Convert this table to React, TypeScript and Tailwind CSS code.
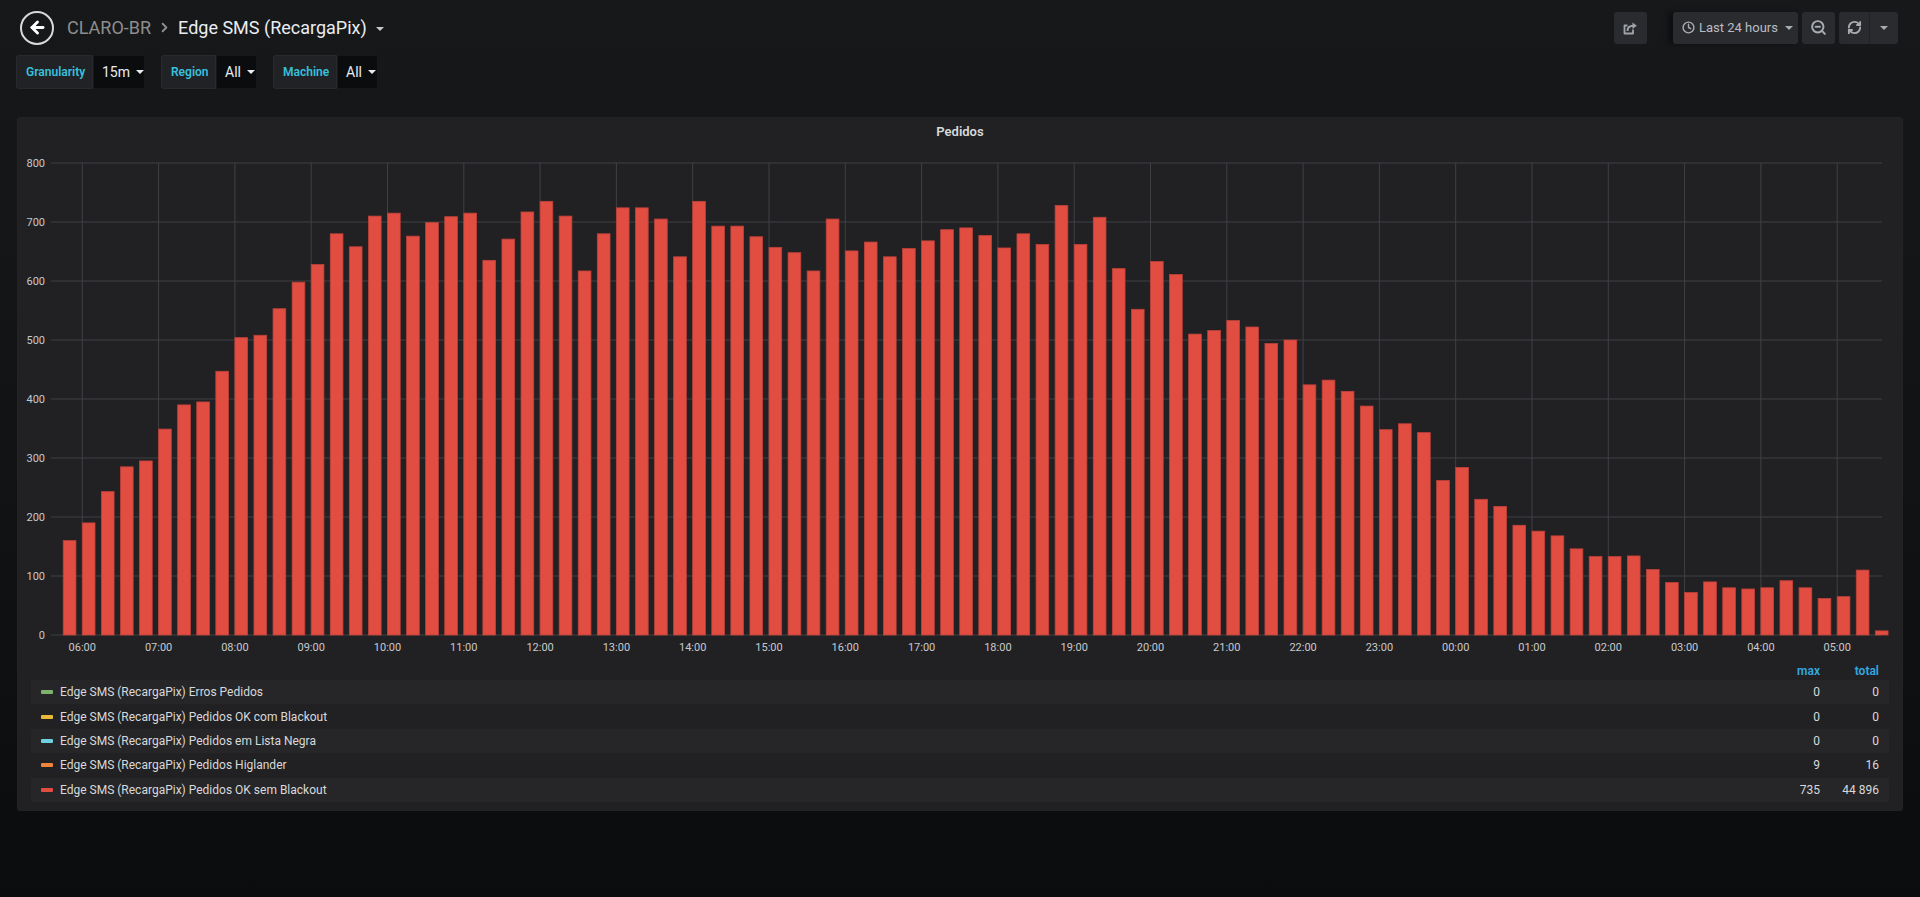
import React from "react";
import { ArrowLeft, ChevronRight, Clock, ZoomOut, RefreshCw } from "lucide-react";

const vals = [
  160, 190, 243, 285, 295, 349, 390, 395, 447, 504, 508, 553, 598, 628, 680, 658,
  710, 715, 676, 699, 709, 715, 635, 671, 717, 735, 710, 617, 680, 724, 724, 705,
  641, 735, 693, 693, 675, 657, 648, 617, 705, 651, 666, 641, 655, 668, 687, 690,
  677, 656, 680, 662, 728, 662, 708, 621, 552, 633, 611, 510, 516, 533, 522, 494,
  500, 424, 432, 413, 388, 348, 358, 343, 262, 284, 230, 218, 186, 176, 168, 146,
  133, 133, 134, 111, 89, 72, 90, 80, 78, 80, 92, 80, 62, 65, 110, 7,
];

const hours = [
  "06:00", "07:00", "08:00", "09:00", "10:00", "11:00", "12:00", "13:00", "14:00",
  "15:00", "16:00", "17:00", "18:00", "19:00", "20:00", "21:00", "22:00", "23:00",
  "00:00", "01:00", "02:00", "03:00", "04:00", "05:00",
];

const legend = [
  { color: "#7eb26d", name: "Edge SMS (RecargaPix) Erros Pedidos", max: "0", total: "0" },
  { color: "#eab839", name: "Edge SMS (RecargaPix) Pedidos OK com Blackout", max: "0", total: "0" },
  { color: "#6ed0e0", name: "Edge SMS (RecargaPix) Pedidos em Lista Negra", max: "0", total: "0" },
  { color: "#ef843c", name: "Edge SMS (RecargaPix) Pedidos Higlander", max: "9", total: "16" },
  { color: "#e24d42", name: "Edge SMS (RecargaPix) Pedidos OK sem Blackout", max: "735", total: "44 896" },
];

const X0 = 33;
const X1 = 1864;
const Y0 = 489;
const SCALE = 472 / 800;
const HOUR = 76.3;
const FIRST_HOUR_X = 64.3;
const SLOT = HOUR / 4;
const BAR_W = 12.7;

function Caret({ color = "#d8d9da" }: { color?: string }) {
  return (
    <span
      className="inline-block w-0 h-0 border-x-[4px] border-x-transparent border-t-[4px]"
      style={{ borderTopColor: color }}
    />
  );
}

function ShareIcon() {
  return (
    <svg width="17" height="16" viewBox="0 0 17 16" fill="none">
      <path d="M11 9.5V13.5H2.5V5.5H5.5" stroke="#9fa4aa" strokeWidth="1.8" strokeLinejoin="round" />
      <path d="M5.5 11C5.5 7.5 8 5.8 11.5 5.8" stroke="#9fa4aa" strokeWidth="2" fill="none" />
      <path d="M10.5 2.5L14.8 5.8L10.5 9.1Z" fill="#9fa4aa" />
    </svg>
  );
}

function VarSelect({ label, value, lw, vw }: { label: string; value: string; lw: string; vw: string }) {
  return (
    <div className="flex h-[34px]">
      <div
        className={`flex items-center pl-[9px] bg-[#202226] border border-[#292a2e] rounded-l-[3px] text-[#38c0dc] text-[12px] font-semibold ${lw}`}
      >
        {label}
      </div>
      <div
        className={`flex items-center gap-[6px] pl-[8px] bg-[#0b0c0e] border border-[#17181a] rounded-r-[3px] text-[14px] text-[#e9edf2] ${vw}`}
      >
        <span>{value}</span>
        <Caret color="#e9edf2" />
      </div>
    </div>
  );
}

function Chart() {
  const gridColor = "#3f4043";
  const yTicks = [0, 100, 200, 300, 400, 500, 600, 700, 800];
  return (
    <svg width="1886" height="515" className="block">
      {yTicks.map((v) => {
        const y = Y0 - v * SCALE;
        return (
          <g key={v}>
            <line x1={X0} x2={X1} y1={y} y2={y} stroke={gridColor} strokeWidth="1" />
            <text x={27} y={y + 4} textAnchor="end" fontSize="11" fill="#c8c9cb" fontFamily="Roboto, sans-serif">
              {v}
            </text>
          </g>
        );
      })}
      {hours.map((h, i) => {
        const x = FIRST_HOUR_X + i * HOUR;
        return (
          <g key={h}>
            <line x1={x} x2={x} y1={Y0 - 800 * SCALE} y2={Y0} stroke={gridColor} strokeWidth="1" />
            <text x={x} y={505} textAnchor="middle" fontSize="11" fill="#c8c9cb" fontFamily="Roboto, sans-serif">
              {h}
            </text>
          </g>
        );
      })}
      {vals.map((v, i) => {
        const x = FIRST_HOUR_X + (i - 1) * SLOT;
        const h = v * SCALE;
        return (
          <rect
            key={i}
            x={x}
            y={Y0 - h}
            width={BAR_W}
            height={h}
            fill="#e24d42"
            stroke="#bf4139"
            strokeWidth="0.8"
          />
        );
      })}
    </svg>
  );
}

export default function App() {
  return (
    <div
      className="w-full h-[897px] overflow-hidden bg-[linear-gradient(180deg,#17181a_0%,#121315_50%,#0b0c0e_100%)] text-[#d8d9da]"
      style={{ fontFamily: "Roboto, 'Noto Sans', sans-serif" }}
    >
      {/* Header */}
      <div className="flex h-[55px] items-center justify-between pl-[20px] pr-[22px]">
        <div className="flex items-center">
          <div className="flex w-[34px] h-[34px] items-center justify-center rounded-full border-2 border-[#d8d9da]">
            <ArrowLeft size={19} strokeWidth={3.6} color="#ffffff" />
          </div>
          <span className="ml-[13px] text-[18px] text-[#8e8e8e]">CLARO-BR</span>
          <ChevronRight className="ml-[6px]" size={15} strokeWidth={3} color="#8e8e8e" />
          <span className="ml-[6px] text-[18px] text-[#e9edf2]">Edge SMS (RecargaPix)</span>
          <span className="ml-[9px] mt-[3px] flex">
            <Caret color="#c7c9cc" />
          </span>
        </div>
        <div className="flex items-center">
          <button className="flex w-[33px] h-[32px] items-center justify-center rounded-[3px] bg-[#2a2b2e]">
            <ShareIcon />
          </button>
          <button className="ml-[26px] flex w-[125px] h-[32px] items-center pl-[9px] gap-[4px] rounded-[3px] bg-[#2a2b2e] shadow-[-5px_0_5px_#0e0f11] text-[13px] text-[#b9bdc2]">
            <Clock size={13} strokeWidth={2.6} color="#a8acb1" />
            <span>Last 24 hours</span>
            <span className="ml-[3px] flex">
              <Caret color="#a8acb1" />
            </span>
          </button>
          <button className="ml-[4px] flex w-[33px] h-[32px] items-center justify-center rounded-[3px] bg-[#2a2b2e]">
            <ZoomOut size={17} strokeWidth={2.8} color="#a8acb1" />
          </button>
          <div className="ml-[4px] flex h-[32px] rounded-[3px] bg-[#2a2b2e]">
            <button className="flex w-[31px] h-[32px] items-center justify-center border-r border-[#222325]">
              <RefreshCw size={15} strokeWidth={3} color="#a8acb1" />
            </button>
            <button className="flex w-[28px] h-[32px] items-center justify-center">
              <Caret color="#a8acb1" />
            </button>
          </div>
        </div>
      </div>

      {/* Variables */}
      <div className="flex h-[34px] gap-[16px] pl-[16px]">
        <VarSelect label="Granularity" value="15m" lw="w-[77px]" vw="w-[52px]" />
        <VarSelect label="Region" value="All" lw="w-[55px]" vw="w-[41px]" />
        <VarSelect label="Machine" value="All" lw="w-[64px]" vw="w-[41px]" />
      </div>

      {/* Panel */}
      <div className="mt-[28px] ml-[17px] w-[1886px] h-[694px] rounded-[3px] bg-[#212124] border border-[#232326] flex flex-col">
        <div className="h-[28px] flex items-center justify-center text-[13px] font-semibold text-[#d8d9da]">
          Pedidos
        </div>
        <Chart />
        <div className="px-[13px] text-[12px]">
          <div className="flex h-[19px] items-center pr-[10px] font-semibold text-[#33a9e0]">
            <div className="flex-1" />
            <div className="w-[60px] text-right">max</div>
            <div className="w-[59px] text-right">total</div>
          </div>
          {legend.map((l, i) => (
            <div
              key={l.name}
              className={`flex h-[24.4px] items-center pl-[10px] pr-[10px] ${i % 2 === 0 ? "bg-[#262629]" : ""}`}
            >
              <span className="w-[12px] h-[4px] rounded-[1px]" style={{ backgroundColor: l.color }} />
              <span className="ml-[7px] flex-1 text-[#d8d9da]">{l.name}</span>
              <div className="w-[60px] text-right text-[#d8d9da]">{l.max}</div>
              <div className="w-[59px] text-right text-[#d8d9da]">{l.total}</div>
            </div>
          ))}
        </div>
      </div>
    </div>
  );
}
